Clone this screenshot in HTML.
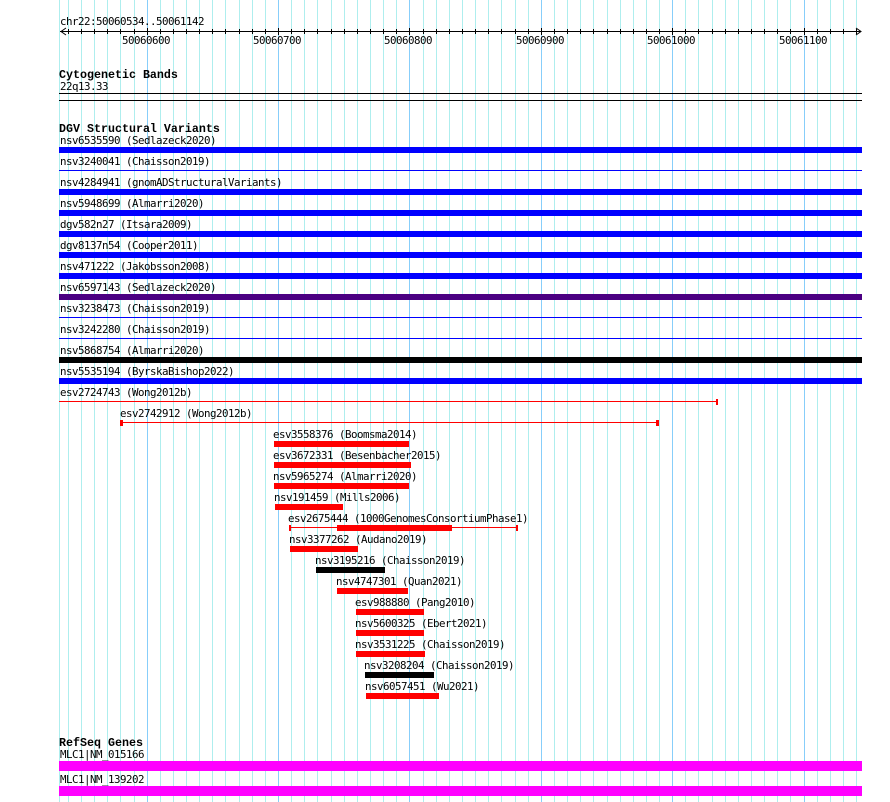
<!DOCTYPE html>
<html><head><meta charset="utf-8"><style>
html,body{margin:0;padding:0;background:#fff;width:890px;height:802px;overflow:hidden}
svg{display:block}
text{font-family:"DejaVu Sans Mono",monospace;font-size:10.8px;letter-spacing:-0.5px;fill:#000;white-space:pre}
text.b{font-family:"Liberation Mono",monospace;font-size:11.67px;letter-spacing:0;font-weight:bold}
</style></head><body>
<svg width="890" height="802" viewBox="0 0 890 802" xmlns="http://www.w3.org/2000/svg">
<g shape-rendering="crispEdges">
<path stroke="#aeeeee" stroke-width="1" fill="none" d="M59.5 0V802M68.5 0V802M81.5 0V802M94.5 0V802M107.5 0V802M120.5 0V802M134.5 0V802M160.5 0V802M173.5 0V802M186.5 0V802M199.5 0V802M212.5 0V802M225.5 0V802M239.5 0V802M252.5 0V802M265.5 0V802M291.5 0V802M304.5 0V802M317.5 0V802M331.5 0V802M344.5 0V802M357.5 0V802M370.5 0V802M383.5 0V802M396.5 0V802M423.5 0V802M436.5 0V802M449.5 0V802M462.5 0V802M475.5 0V802M488.5 0V802M501.5 0V802M515.5 0V802M528.5 0V802M554.5 0V802M567.5 0V802M580.5 0V802M593.5 0V802M607.5 0V802M620.5 0V802M633.5 0V802M646.5 0V802M659.5 0V802M685.5 0V802M698.5 0V802M712.5 0V802M725.5 0V802M738.5 0V802M751.5 0V802M764.5 0V802M777.5 0V802M790.5 0V802M817.5 0V802M830.5 0V802M843.5 0V802M856.5 0V802"/>
<path stroke="#87cefa" stroke-width="1" fill="none" d="M147.5 0V802M278.5 0V802M409.5 0V802M541.5 0V802M672.5 0V802M804.5 0V802"/>
<path stroke="#000" stroke-width="1" fill="none" d="M60 31.5H861M68.5 29V34M81.5 29V34M94.5 29V34M107.5 29V34M120.5 29V34M134.5 29V34M147.5 28V35M160.5 29V34M173.5 29V34M186.5 29V34M199.5 29V34M212.5 29V34M225.5 29V34M239.5 29V34M252.5 29V34M265.5 29V34M278.5 28V35M291.5 29V34M304.5 29V34M317.5 29V34M331.5 29V34M344.5 29V34M357.5 29V34M370.5 29V34M383.5 29V34M396.5 29V34M409.5 28V35M423.5 29V34M436.5 29V34M449.5 29V34M462.5 29V34M475.5 29V34M488.5 29V34M501.5 29V34M515.5 29V34M528.5 29V34M541.5 28V35M554.5 29V34M567.5 29V34M580.5 29V34M593.5 29V34M607.5 29V34M620.5 29V34M633.5 29V34M646.5 29V34M659.5 29V34M672.5 28V35M685.5 29V34M698.5 29V34M712.5 29V34M725.5 29V34M738.5 29V34M751.5 29V34M764.5 29V34M777.5 29V34M790.5 29V34M804.5 28V35M817.5 29V34M830.5 29V34M843.5 29V34M856.5 29V34M59 93.5H862M59 100.5H862"/>
<rect x="59" y="147" width="803" height="6" fill="#0000ff"/>
<rect x="59" y="170" width="803" height="1" fill="#0000ff"/>
<rect x="59" y="189" width="803" height="6" fill="#0000ff"/>
<rect x="59" y="210" width="803" height="6" fill="#0000ff"/>
<rect x="59" y="231" width="803" height="6" fill="#0000ff"/>
<rect x="59" y="252" width="803" height="6" fill="#0000ff"/>
<rect x="59" y="273" width="803" height="6" fill="#0000ff"/>
<rect x="59" y="294" width="803" height="6" fill="#4b0082"/>
<rect x="59" y="317" width="803" height="1" fill="#0000ff"/>
<rect x="59" y="338" width="803" height="1" fill="#0000ff"/>
<rect x="59" y="357" width="803" height="6" fill="#000"/>
<rect x="59" y="378" width="803" height="6" fill="#0000ff"/>
<rect x="59" y="401" width="658" height="1" fill="#f00"/>
<rect x="716" y="399" width="2" height="6" fill="#f00"/>
<rect x="121" y="422" width="537" height="1" fill="#f00"/>
<rect x="120" y="420" width="3" height="6" fill="#f00"/>
<rect x="656" y="420" width="3" height="6" fill="#f00"/>
<rect x="274" y="441" width="135" height="6" fill="#f00"/>
<rect x="274" y="462" width="137" height="6" fill="#f00"/>
<rect x="274" y="483" width="135" height="6" fill="#f00"/>
<rect x="275" y="504" width="68" height="6" fill="#f00"/>
<rect x="290" y="527" width="227" height="1" fill="#f00"/>
<rect x="289" y="525" width="2" height="6" fill="#f00"/>
<rect x="516" y="525" width="2" height="6" fill="#f00"/>
<rect x="337" y="525" width="115" height="6" fill="#f00"/>
<rect x="290" y="546" width="68" height="6" fill="#f00"/>
<rect x="316" y="567" width="69" height="6" fill="#000"/>
<rect x="337" y="588" width="71" height="6" fill="#f00"/>
<rect x="356" y="609" width="68" height="6" fill="#f00"/>
<rect x="356" y="630" width="68" height="6" fill="#f00"/>
<rect x="356" y="651" width="69" height="6" fill="#f00"/>
<rect x="365" y="672" width="69" height="6" fill="#000"/>
<rect x="366" y="693" width="73" height="6" fill="#f00"/>
<rect x="59" y="761" width="803" height="10" fill="#ff00ff"/>
<rect x="59" y="786" width="803" height="10" fill="#ff00ff"/>
</g>
<path d="M66 28L61 31.5L66 35M856 28L861 31.5L856 35" fill="none" stroke="#000" stroke-width="1"/>
<text x="60" y="25">chr22:50060534..50061142</text>
<text x="122" y="44">50060600</text>
<text x="253" y="44">50060700</text>
<text x="384" y="44">50060800</text>
<text x="516" y="44">50060900</text>
<text x="647" y="44">50061000</text>
<text x="779" y="44">50061100</text>
<text class="b" x="59" y="78">Cytogenetic Bands</text>
<text x="60" y="90">22q13.33</text>
<text class="b" x="59" y="132">DGV Structural Variants</text>
<text x="60" y="144">nsv6535590 (Sedlazeck2020)</text>
<text x="60" y="165">nsv3240041 (Chaisson2019)</text>
<text x="60" y="186">nsv4284941 (gnomADStructuralVariants)</text>
<text x="60" y="207">nsv5948699 (Almarri2020)</text>
<text x="60" y="228">dgv582n27 (Itsara2009)</text>
<text x="60" y="249">dgv8137n54 (Cooper2011)</text>
<text x="60" y="270">nsv471222 (Jakobsson2008)</text>
<text x="60" y="291">nsv6597143 (Sedlazeck2020)</text>
<text x="60" y="312">nsv3238473 (Chaisson2019)</text>
<text x="60" y="333">nsv3242280 (Chaisson2019)</text>
<text x="60" y="354">nsv5868754 (Almarri2020)</text>
<text x="60" y="375">nsv5535194 (ByrskaBishop2022)</text>
<text x="60" y="396">esv2724743 (Wong2012b)</text>
<text x="120" y="417">esv2742912 (Wong2012b)</text>
<text x="273" y="438">esv3558376 (Boomsma2014)</text>
<text x="273" y="459">esv3672331 (Besenbacher2015)</text>
<text x="273" y="480">nsv5965274 (Almarri2020)</text>
<text x="274" y="501">nsv191459 (Mills2006)</text>
<text x="288" y="522">esv2675444 (1000GenomesConsortiumPhase1)</text>
<text x="289" y="543">nsv3377262 (Audano2019)</text>
<text x="315" y="564">nsv3195216 (Chaisson2019)</text>
<text x="336" y="585">nsv4747301 (Quan2021)</text>
<text x="355" y="606">esv988880 (Pang2010)</text>
<text x="355" y="627">nsv5600325 (Ebert2021)</text>
<text x="355" y="648">nsv3531225 (Chaisson2019)</text>
<text x="364" y="669">nsv3208204 (Chaisson2019)</text>
<text x="365" y="690">nsv6057451 (Wu2021)</text>
<text class="b" x="59" y="746">RefSeq Genes</text>
<text x="60" y="758">MLC1|NM_015166</text>
<text x="60" y="783">MLC1|NM_139202</text>
</svg>
</body></html>
